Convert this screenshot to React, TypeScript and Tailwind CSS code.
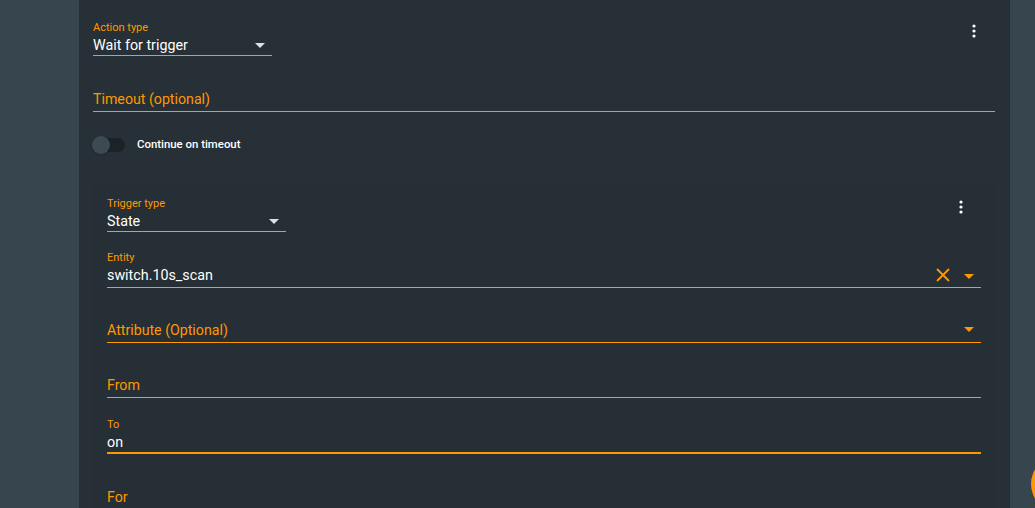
import React from 'react';

const orange = 'text-[#ff9800]';

const Dots = () => (
  <svg width="4" height="14" viewBox="0 0 4 14" className="fill-white">
    <circle cx="2" cy="2" r="1.6" />
    <circle cx="2" cy="7" r="1.6" />
    <circle cx="2" cy="12" r="1.6" />
  </svg>
);

const Caret = ({ color }: { color: string }) => (
  <svg width="10" height="5" viewBox="0 0 10 5">
    <path d="M0 0h10L5 5z" fill={color} />
  </svg>
);

const Field = ({
  label,
  value,
  width,
  caret,
  caretColor = '#ff9800',
  clear,
  thick,
}: {
  label?: string;
  value?: string;
  width?: string;
  caret?: boolean;
  caretColor?: string;
  clear?: boolean;
  thick?: boolean;
}) => (
  <div
    className={`${width ?? 'w-full'} ${thick ? 'border-b-2' : 'border-b'} ${value && !clear ? 'pb-0' : 'pb-[2px]'} border-[#ff9800] h-[46px] flex items-end`}
  >
    <div className="flex-1 flex flex-col">
      {value ? (
        <>
          <span className={`text-[11px] leading-[14px] ${orange}`}>{label}</span>
          <span className="text-[14.3px] leading-[20px] text-white">{value}</span>
        </>
      ) : (
        <span className={`text-[14.2px] leading-[20px] ${orange}`}>{label}</span>
      )}
    </div>
    {clear && (
      <svg width="14" height="14" viewBox="0 0 14 14" className="mb-[3px] mr-[14px]">
        <path d="M1 1l12 12M13 1L1 13" stroke="#ff9800" strokeWidth="1.8" />
      </svg>
    )}
    {caret && (
      <div className={`${value && !clear ? 'mb-[7px]' : clear ? 'mb-[6px]' : 'mb-[8px]'} mr-[7px]`}>
        <Caret color={caretColor} />
      </div>
    )}
  </div>
);

export default function App() {
  return (
    <div className="w-[1035px] h-[508px] overflow-hidden bg-[#37454e] relative font-['Roboto',sans-serif]">
      <div className="ml-[79px] w-[931px] h-full bg-[#263036] pl-[14px] pr-[15px]">
        <div className="flex items-start pt-[10px]">
          <Field label="Action type" value="Wait for trigger" width="w-[179px]" caret caretColor="#e0e0e0" />
          <div className="ml-auto mt-[14px] mr-[19px]">
            <Dots />
          </div>
        </div>
        <div className="mt-[10px]">
          <Field label="Timeout (optional)" />
        </div>
        <div className="flex items-center gap-[12px] mt-[24px]">
          <div className="relative w-[32px] h-[14px] rounded-full bg-[#1c2327]">
            <div className="absolute -left-[1px] -top-[2px] w-[18px] h-[18px] rounded-full bg-[#3e4a52] shadow" />
          </div>
          <span className="text-[11.4px] font-medium text-white">Continue on timeout</span>
        </div>
        <div className="mt-[30px] bg-[#252f35] h-[400px] pl-[14px] pr-[14px] pt-[3px]">
          <div className="flex items-start">
            <Field label="Trigger type" value="State" width="w-[179px]" caret caretColor="#e0e0e0" />
            <div className="ml-auto mt-[14px] mr-[18px]">
              <Dots />
            </div>
          </div>
          <div className="mt-[10px]">
            <Field label="Entity" value="switch.10s_scan" clear caret />
          </div>
          <div className="mt-[9px]">
            <Field label="Attribute (Optional)" caret />
          </div>
          <div className="mt-[9px]">
            <Field label="From" />
          </div>
          <div className="mt-[10px]">
            <Field label="To" value="on" thick />
          </div>
          <div className="mt-[31px]">
            <span className={`text-[14.2px] ${orange}`}>For</span>
          </div>
        </div>
      </div>
      <div className="absolute left-[1031px] top-[456px] w-[56px] h-[56px] rounded-full bg-[#ff9800]" />
    </div>
  );
}
